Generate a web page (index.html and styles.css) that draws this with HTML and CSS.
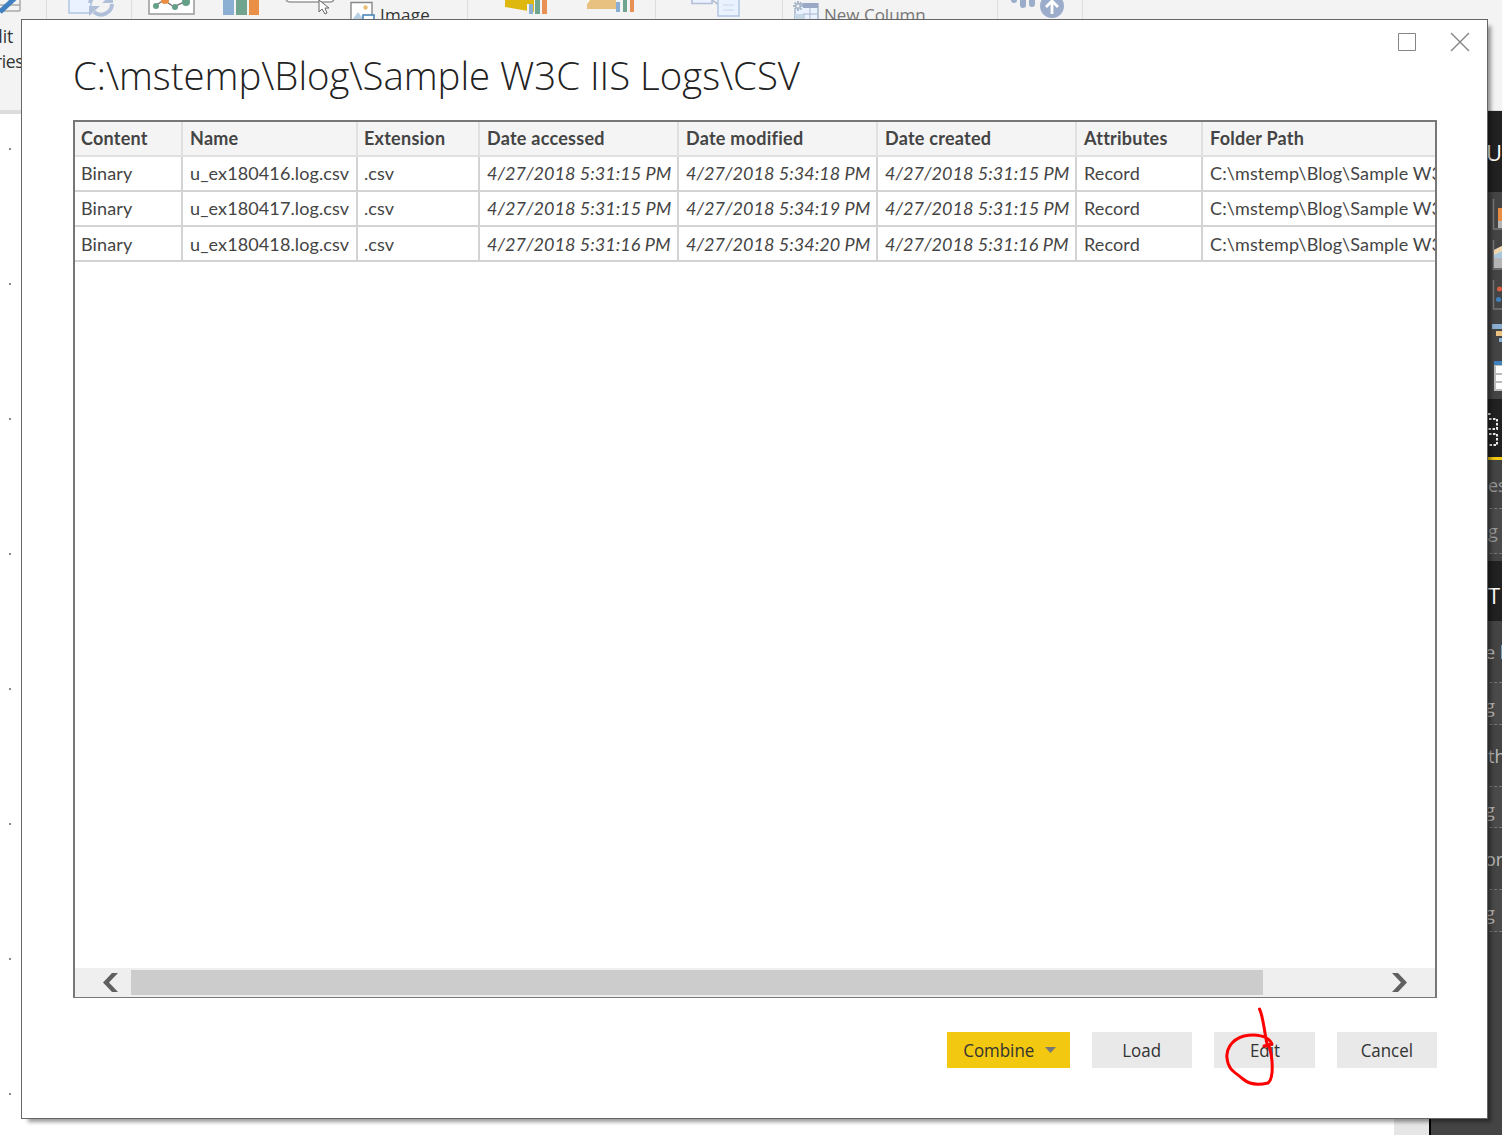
FILE: index.html
```html
<!DOCTYPE html>
<html lang="en">
<head>
<meta charset="utf-8">
<title>Combine files</title>
<link rel="stylesheet" href="styles.css">
</head>
<body>
<div class="app">
  <header class="ribbon">
    <div class="group g1">
      <svg width="46" height="20"><path d="M0 11H20M20 0V11M0 5H20" stroke="#aaa" stroke-width="1.5" fill="none"/><path d="M0 12L16-3" stroke="#4080c0" stroke-width="5"/></svg>
      <div class="cut cut1">dit</div>
      <div class="cut cut2">ries</div>
    </div>
    <div class="group g2"><svg width="84" height="20"><path d="M22-4V13H44V-4" fill="#e9f2fe" stroke="#b3c6e3" stroke-width="1.5"/><path d="M43 3A11 11 0 0 1 60-4M65 4A11 11 0 0 1 47 12" fill="none" stroke="#b0bfd8" stroke-width="4"/><path d="M42 6H53L42 16ZM66 3H55L66-7Z" fill="#b0bfd8"/></svg></div>
    <div class="group g3"><svg width="335" height="20">
      <path d="M17-3V14H62V-3" fill="#fff" stroke="#999" stroke-width="1.5"/><path d="M23 6L32 0L42 7L54 1L58-3" fill="none" stroke="#777" stroke-width="1.5"/><circle cx="24" cy="6" r="3" fill="#64a088"/><circle cx="33" cy="0" r="4" fill="#eb8d43"/><circle cx="43" cy="7" r="3" fill="#64a088"/><circle cx="54" cy="2" r="4" fill="#64a088"/>
      <path d="M91 0H102V15H91Z" fill="#8bafd3"/><path d="M104 0H115V15H104Z" fill="#70a48f"/><path d="M117 0H127V15H117Z" fill="#ea9046"/>
      <path d="M154-2Q154 2 158 2H198Q202 2 202-2" fill="#fff" stroke="#999" stroke-width="1.5"/><path d="M187 0V12L190 9L193 14L195 13L193 8H197Z" fill="#fff" stroke="#666"/>
      <path d="M219 2.5H240V24H219Z" fill="#fff" stroke="#888" stroke-width="1.4"/><circle cx="233.500" cy="7.500" r="2.200" fill="#e8bd73"/><path d="M220 20L226 12L232 20Z" fill="#b9d0e2"/><path d="M231 15H242V24H231Z" fill="#fff" stroke="#4080b5" stroke-width="1.5"/>
      <text x="248" y="21" class="rt im">Image</text></svg></div>
    <div class="group g4"><svg width="187" height="20"><path d="M37-1H66V12L37 7Z" fill="#dfb80f"/><path d="M59 4H65V16H59Z" fill="#f3f3f3"/><path d="M61 4H65V14H61Z" fill="#8bafd3"/><path d="M67-1H72V14H67Z" fill="#70a48f"/><path d="M74-1H79V14H74Z" fill="#e99055"/><path d="M119 0H148V9H119Z" fill="#e8c181"/><path d="M119 0V4L122 0Z" fill="#fff"/><path d="M148 2H152V12H148Z" fill="#8bafd3"/><path d="M155-1H159V12H155Z" fill="#70a48f"/><path d="M162-1H166V12H162Z" fill="#e99055"/></svg></div>
    <div class="group g5"><svg width="126" height="20"><path d="M36-4V3.500H56V-4M56 0L63 5" fill="#e9f2fe" stroke="#b3bfd6" stroke-width="1.600"/><path d="M62 0V16H83V0" fill="#e9f2fe" stroke="#b3c6e3" stroke-width="1.500"/><path d="M67 5H78M67 10H78" stroke="#c5d6ec"/></svg></div>
    <div class="group g6"><svg width="214" height="20"><path d="M14 4H35V22H12V10" fill="#e9f2fe" stroke="#9aaac6" stroke-width="1.300"/><path d="M20 3H35V8H20Z" fill="#98a8c5"/><path d="M12 14H22V20H12Z" fill="#c7d8e8"/><path d="M27 8V20M20 14H35" stroke="#a9b7cd"/><path d="M10 6H20M15 1V11M11.500 2.500L18.500 9.500M18.500 2.500L11.500 9.500" stroke="#aab9ca" stroke-width="2"/><circle cx="15" cy="6" r="1.500" fill="#eee"/><text x="41" y="21" class="rt dim">New Column</text></svg></div>
    <div class="group g7"><svg width="84" height="20"><path d="M16 0V0M25 0V5M34 0V4" stroke="#9badca" stroke-width="6" stroke-linecap="round"/><circle cx="54" cy="6" r="13" fill="#f3f3f3"/><circle cx="54" cy="6" r="12" fill="#9badca"/><path d="M54 14V1M48 7L54 1L60 7" fill="none" stroke="#fff" stroke-width="2.800"/></svg></div>
  </header>
  <div class="work">
    <main class="canvas"><ul class="dots"><li></li><li></li><li></li><li></li><li></li><li></li><li></li><li></li></ul></main>
    <div class="gutter"></div>
    <aside class="panel">
      <div class="head h1"><span class="u">U</span></div>
      <div class="visuals"><svg width="14" height="207" viewBox="0 192 14 207">
        <g fill="none" stroke="#777" stroke-width="1.500"><path d="M5.500 199V229H14M5.500 240V269H14M5.500 280V309H14"/></g>
        <path d="M10 208H14V221H10Z" fill="#e88c43"/><path d="M10 221H14V228H10Z" fill="#b5b5b5"/><path d="M6 250L14 246V268H6Z" fill="#b5b5b5"/><path d="M6 250L14 246V253L6 257Z" fill="#f1d7ad"/><path d="M6 255L14 251V258H6Z" fill="#a9c9df"/><circle cx="11.500" cy="289" r="2.500" fill="#d75e43"/><circle cx="10.500" cy="299.500" r="2.500" fill="#4080bd"/>
        <path d="M4 324H14V329H4ZM11 338H14V342H11Z" fill="#8bafd3"/><path d="M8 331H14V336H8Z" fill="#e8c181"/><path d="M6 361H14V391H6Z" fill="#bbb"/><path d="M6 361H14V365H6Z" fill="#4080bd"/><path d="M8 366H14V373H8ZM8 375H14V381H8ZM8 383H14V389H8Z" fill="#fff"/></svg></div>
      <div class="tab"><svg width="14" height="58" viewBox="0 399 14 58"><path d="M0 414H3M1 419H9V429H0M1 434H9V445H0" fill="none" stroke="#eee" stroke-width="2" stroke-dasharray="2.500 1.500"/></svg></div>
      <div class="row r1">es</div><div class="row well w1">g</div><div class="row gap1"></div>
      <div class="head h2"><span>T</span></div>
      <div class="row f1 in">e l</div><div class="row well f2 in">g</div><div class="row f3">th</div><div class="row well f4 in">g</div><div class="row f5 in">or</div><div class="row well f6 in">g</div>
    </aside>
  </div>
</div>
<section class="dialog" role="dialog">
  <div class="titlebar">
    <h1><span>C:\mstemp\Blog\Sample W3C IIS Logs\CSV</span></h1>
    <svg class="winbtns" width="76" height="22"><path d="M1.500 2.500H18.500V19.500H1.500Z" fill="none" stroke="#858585"/><path d="M54 2L72 20M72 2L54 20" stroke="#858585" stroke-width="1.400"/></svg>
  </div>
  <div class="frame">
    <div class="table">
      <div class="tr th"><span>Content</span><span>Name</span><span>Extension</span><span>Date accessed</span><span>Date modified</span><span>Date created</span><span>Attributes</span><span>Folder Path</span></div>
      <div class="tr"><span>Binary</span><span>u_ex180416.log.csv</span><span>.csv</span><i>4/27/2018 5:31:15 PM</i><i>4/27/2018 5:34:18 PM</i><i>4/27/2018 5:31:15 PM</i><span>Record</span><span>C:\mstemp\Blog\Sample W3C</span></div>
      <div class="tr"><span>Binary</span><span>u_ex180417.log.csv</span><span>.csv</span><i>4/27/2018 5:31:15 PM</i><i>4/27/2018 5:34:19 PM</i><i>4/27/2018 5:31:15 PM</i><span>Record</span><span>C:\mstemp\Blog\Sample W3C</span></div>
      <div class="tr"><span>Binary</span><span>u_ex180418.log.csv</span><span>.csv</span><i>4/27/2018 5:31:16 PM</i><i>4/27/2018 5:34:20 PM</i><i>4/27/2018 5:31:16 PM</i><span>Record</span><span>C:\mstemp\Blog\Sample W3C</span></div>
    </div>
    <div class="scroll">
      <svg width="56" height="29"><path d="M37 5H43L34 14.500L43 24H37L28 14.500Z" fill="#606060"/></svg>
      <div class="thumb"></div>
      <svg class="right" width="56" height="29"><path d="M13 5H19L28 14.500L19 24H13L22 14.500Z" fill="#606060"/></svg>
    </div>
  </div>
  <footer class="actions">
    <button class="primary"><span>Combine</span><svg width="11" height="6"><path d="M0 0H11L5.500 6Z" fill="#777"/></svg></button>
    <button><span>Load</span></button><button class="edit"><span>Edit</span></button><button><span>Cancel</span></button>
  </footer>
</section>
<svg class="ink" width="60" height="86" viewBox="1220 1004 60 86"><path d="M1259.500 1009C1263 1016 1264 1029 1267 1044M1234 1042M1264 1046L1272 1044C1268 1035 1255 1034 1244 1036C1230 1040 1226 1051 1227 1058C1228 1070 1235 1072 1243 1079C1250 1085 1260 1085 1268 1083C1274 1078 1273 1058 1269 1046L1264 1046" fill="none" stroke="#f00" stroke-width="3" stroke-linecap="round" stroke-linejoin="round"/></svg>
</body>
</html>
```
FILE: styles.css
```css
* { box-sizing: border-box; }
body { margin: 0; width: 1502px; height: 1135px; overflow: hidden; position: relative; font-family: "Open Sans", sans-serif; color: #333; background: #fff; }
svg { display: block; flex: none; }
.app { display: flex; flex-direction: column; height: 1135px; }
.ribbon { height: 114px; display: flex; background: #f3f3f3; border-bottom: 4px solid #dcdcdc; flex: none; }
.group { border-right: 1px solid #dedede; overflow: hidden; flex: none; }
.g1 { width: 47px; } .g2 { width: 85px; } .g3 { width: 336px; } .g4 { width: 188px; }
.g5 { width: 127px; } .g6 { width: 215px; } .g7 { width: 85px; }
.rt { font-size: 17px; fill: #333; } .dim { fill: #777; } .im { letter-spacing: .3px; }
.cut { font-size: 17.5px; line-height: 25px; color: #333; white-space: nowrap; }
.cut1 { margin: 4px 0 0 -8px; } .cut2 { margin-left: -5px; letter-spacing: -.4px; }
.work { display: flex; flex: 1; margin-top: -3px; }
.canvas { width: 1394px; background: #fff; margin-top: 3px; }
.dots { list-style: none; margin: 0; padding: 34px 0 0 9px; display: flex; flex-direction: column; gap: 133px; }
.dots li { width: 2px; height: 2px; background: #888; }
.gutter { width: 37px; background: #e6e6e6; border-right: 2px solid #000; }
.panel { width: 71px; background: #444; color: #b8b8b8; font-size: 18px; overflow: hidden; }
.panel > div { padding-left: 57px; white-space: nowrap; }
.head { background: #212121; color: #fff; display: flex; align-items: center; font-size: 22px; }
.h1 { height: 81px; } .h2 { height: 60px; padding-top: 8px; } .u { margin-left: -2px; }
.visuals { height: 207px; }
.tab { height: 61px; background: #212121; border-bottom: 3px solid #f2c811; }
.row { display: flex; align-items: center; border-bottom: 1px dashed #777; }
.well { background: #4a4a4a; }
.r1 { height: 49px; color: #999; padding-top: 2px; } .w1 { height: 45px; color: #999; } .gap1 { height: 7px; border: 0; }
.f1 { height: 62px; } .f2 { height: 42px; padding-top: 5px; } .f3 { height: 62px; } .f4 { height: 41px; padding-top: 5px; } .f5 { height: 62px; } .f6 { height: 42px; padding-top: 5px; }
.panel > .in { padding-left: 54px; }
.dialog { position: absolute; left: 21px; top: 19px; width: 1467px; height: 1100px; background: #fff; border: 1px solid #666; box-shadow: 5px 5px 4px -2px rgba(0,0,0,.4); padding: 0 50px 0 51px; }
.titlebar { height: 100px; display: flex; justify-content: space-between; }
h1 { margin: 0; padding-top: 27px; font-size: 39px; font-weight: 300; line-height: 56px; white-space: nowrap; width: 730px; color: #222; }
h1 span { display: inline-block; transform: scaleX(.983); transform-origin: 0 0; }
.winbtns { margin: 11px -36px 0 0; }
.frame { width: 1364px; height: 878px; border: 2px solid #777; border-bottom-width: 1px; display: flex; flex-direction: column; justify-content: space-between; overflow: hidden; }
.table { font-family: Lato, sans-serif; font-size: 18px; color: #444; letter-spacing: .12px; }
.tr { display: grid; grid-template-columns: 108px 175px 122px 199px 199px 199px 126px 232px; height: 35px; }
.tr > * { border-right: 2px solid #d3d3d3; border-bottom: 2px solid #d3d3d3; padding-left: 7px; line-height: 32px; white-space: nowrap; overflow: hidden; }
.tr > i { letter-spacing: .05px; }
.tr > :first-child, .tr > :nth-child(3) { padding-left: 6px; }
.tr > :last-child { border-right: 0; }
.th { font-weight: 700; background: #f4f4f4; letter-spacing: .25px; font-variant-ligatures: none; }
.th > * { border-color: #e0e0e0; line-height: 33px; }
.tr:last-child > * { line-height: 34px; }
.scroll { height: 29px; background: #efefef; display: flex; align-items: center; }
.thumb { width: 1132px; height: 25px; background: #ccc; }
.scroll .right { margin-left: auto; }
.actions { display: flex; justify-content: flex-end; gap: 22px; padding-top: 34px; }
button { width: 100px; height: 36px; border: 0; padding: 0; background: #e9e9e9; font-family: "Open Sans", sans-serif; font-size: 18px; color: #333; display: flex; align-items: center; justify-content: center; }
button span { display: inline-block; transform: scaleX(.94); }
.edit { width: 101px; }
.primary { width: 123px; background: #f2c811; gap: 9px; }
.ink { position: absolute; left: 1220px; top: 1004px; }
```
